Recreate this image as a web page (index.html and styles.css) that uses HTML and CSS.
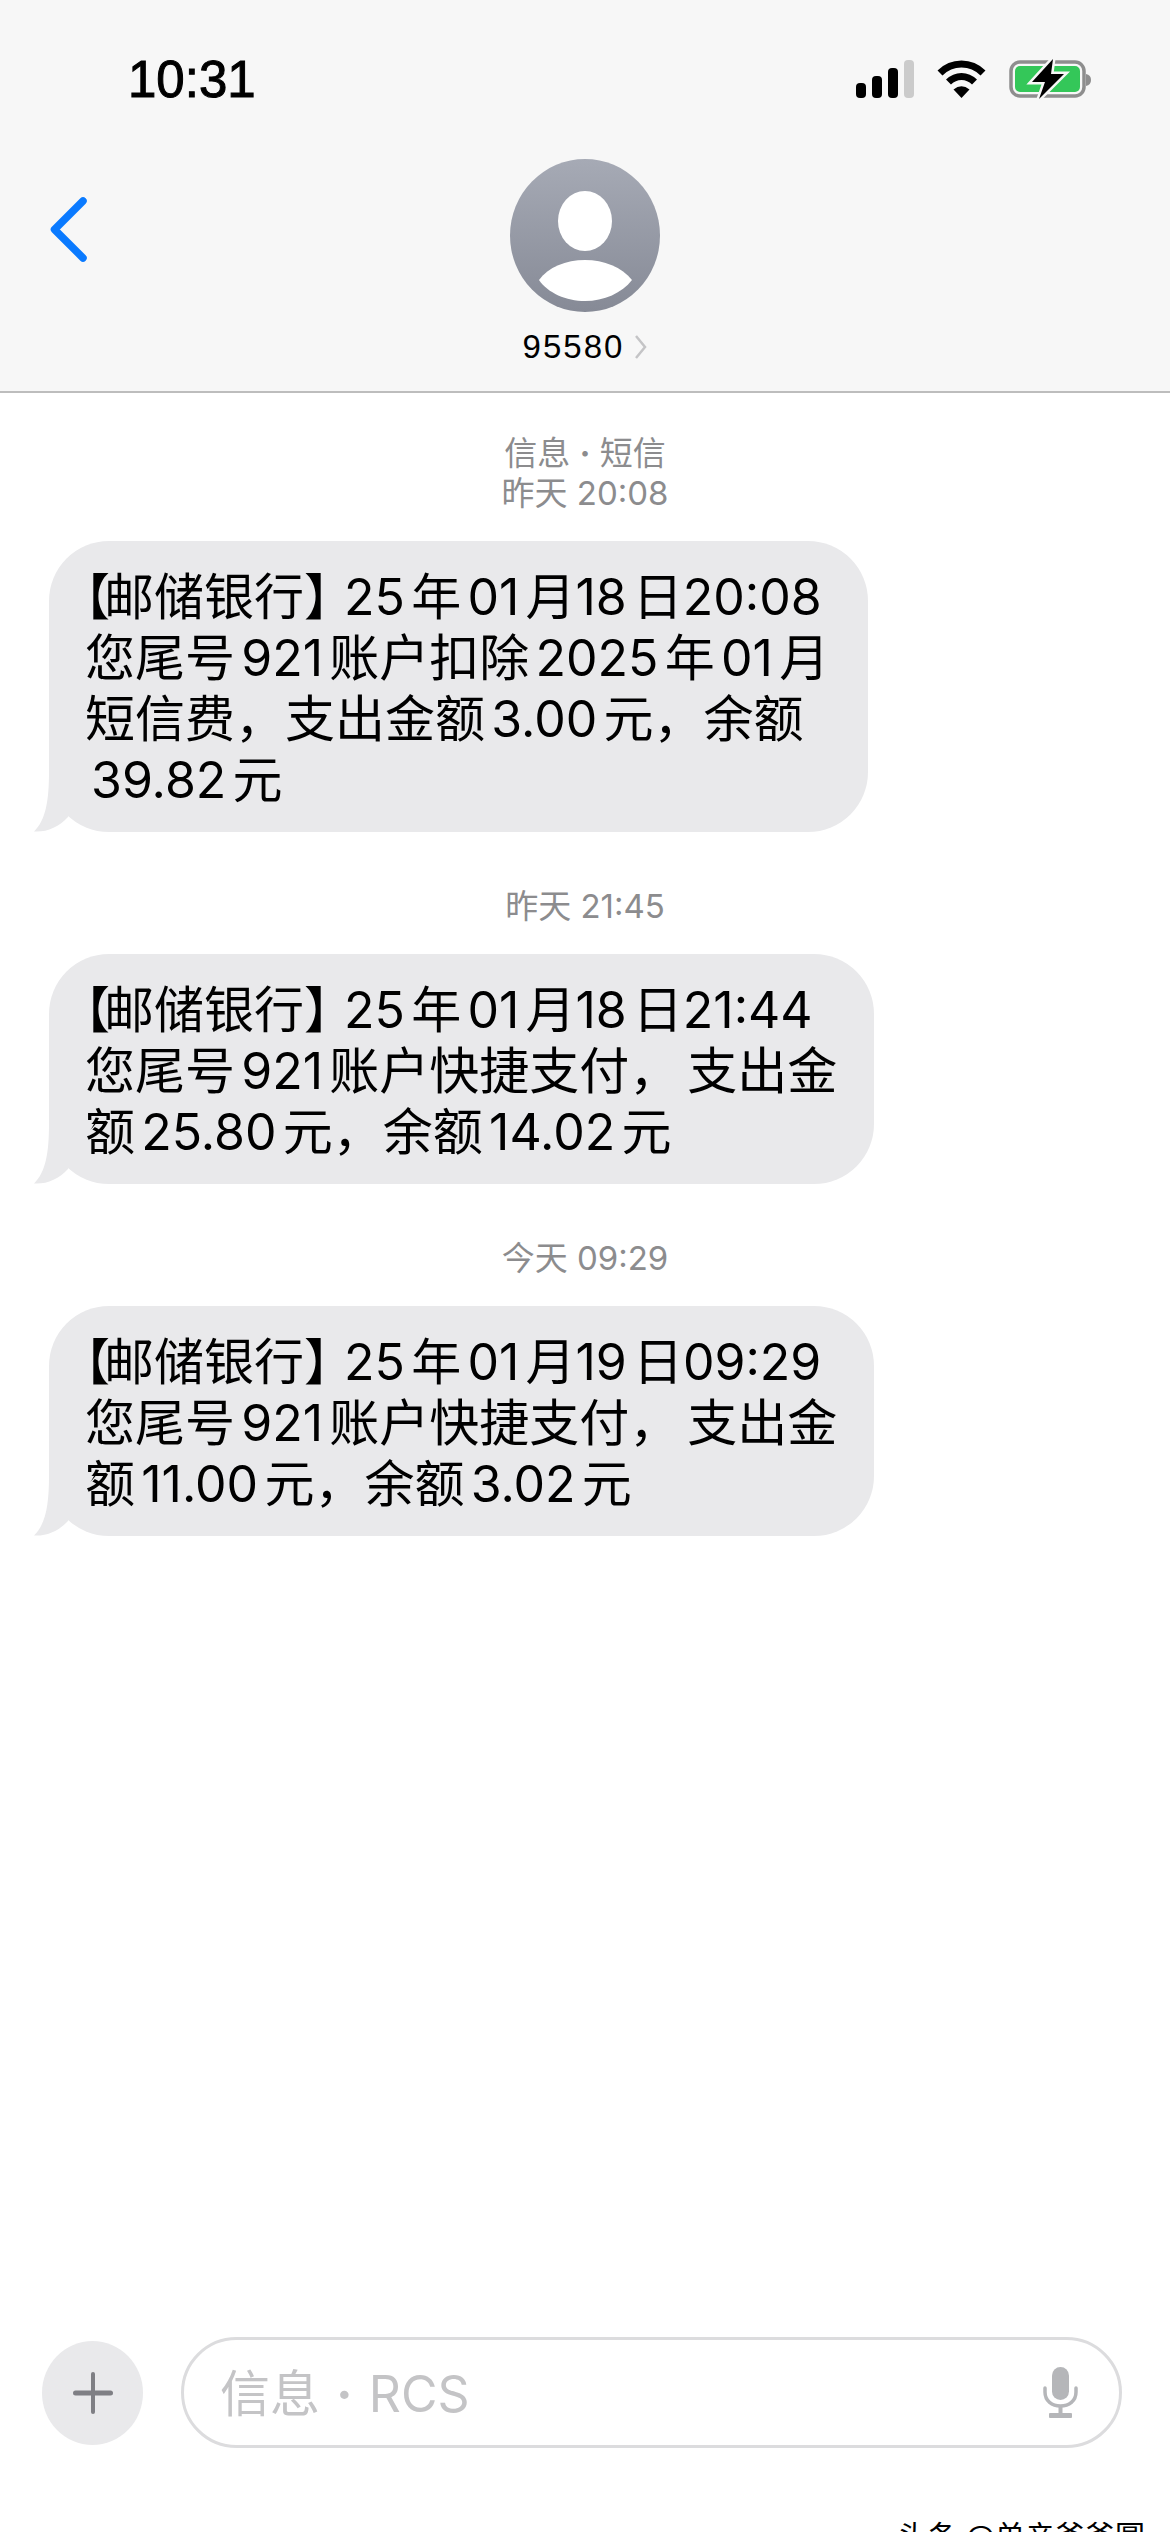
FILE: index.html
```html
<!DOCTYPE html>
<html lang="zh-CN">

<head>
    <meta charset="UTF-8">
    <meta name="viewport" content="width=device-width, initial-scale=1.0">
    <title>95580</title>
    <link rel="stylesheet" href="styles.css">
</head>

<body>
    <header class="header">
        <div class="status">
            <span class="time">10:31</span>
            <div class="status-icons">
                <svg width="58" height="38" viewBox="0 0 58 38">
                    <rect x="0" y="23" width="10" height="15" rx="4" fill="#000" />
                    <rect x="16" y="16" width="10" height="22" rx="4" fill="#000" />
                    <rect x="32" y="8" width="10" height="30" rx="4" fill="#000" />
                    <rect x="48" y="0" width="10" height="38" rx="4" fill="#cbcbcb" />
                </svg>
                <svg width="49" height="38" viewBox="0 0 49 38">
                    <path d="M3 13 C15 1 34 1 46 13" fill="none" stroke="#000" stroke-width="7" />
                    <path d="M11.500 22 C19 14.500 30 14.500 37.500 22" fill="none" stroke="#000" stroke-width="7" />
                    <path d="M16.500 29.500 Q24.500 23 32.500 29.500 L24.500 38 Z" fill="#000" />
                </svg>
                <svg class="battery" width="82" height="38" viewBox="0 0 82 38">
                    <rect x="2" y="2" width="73" height="34" rx="9" fill="none" stroke="#8e8e8e" stroke-width="3.500" />
                    <rect x="6" y="6" width="65" height="26" rx="5" fill="#34c759" />
                    <path d="M77 14 Q82 15 82 20 Q82 25 77 26 Z" fill="#8e8e8e" />
                    <path d="M44 -1 L23 22 L36 22 L30 39 L55 14 L42 14 Z" fill="#000" stroke="#f7f7f7" stroke-width="5" paint-order="stroke" />
                </svg>
            </div>
        </div>
        <div class="nav">
            <svg class="back" width="38" height="65" viewBox="0 0 38 65">
                <path d="M33 4 L4.500 32.500 L33 61" fill="none" stroke="#0a7aff" stroke-width="7.500" stroke-linecap="round" stroke-linejoin="round" />
            </svg>
            <div class="contact">
                <svg class="avatar" width="150" height="153" viewBox="0 0 150 153">
                    <defs>
                        <linearGradient id="avatar-fill" x1="0" y1="0" x2="0" y2="1">
                            <stop offset="0" stop-color="#a6aab5" />
                            <stop offset="1" stop-color="#868a96" />
                        </linearGradient>
                    </defs>
                    <ellipse cx="75" cy="76.500" rx="75" ry="76.500" fill="url(#avatar-fill)" />
                    <ellipse cx="75" cy="62" rx="27" ry="30" fill="#fff" />
                    <path d="M29 121 C38 108 56 101 75 101 C94 101 112 108 122 121 C112 134 94 142 75 142 C56 142 38 134 29 121 Z" fill="#fff" />
                </svg>
                <div class="name">
                    <span>95580</span>
                    <svg width="13" height="24" viewBox="0 0 13 24">
                        <path d="M2 1 L11 12 L2 23" fill="none" stroke="#c4c4c6" stroke-width="2.500" />
                    </svg>
                </div>
            </div>
        </div>
    </header>

    <main class="messages">
        <p class="stamp">信息 <span class="dot">·</span> 短信<br>昨天 20:08</p>
        <div class="bubble bubble-a">
            <span class="bk-l">【</span>邮储银行<span class="bk-r">】</span>25年01月<span class="tight day">18</span>日<span class="tight">20:08</span><br>
            您尾号921账户扣除2025年01月<br>
            短信费，支出金额3.00元，余额<br>
            <span class="line-in">39.82元</span>
            <svg class="tail" width="60" height="60" viewBox="0 0 60 60">
                <path d="M15 0 C15 28 12 48 0 59.500 C12 60.500 25 55 34 45 L60 0 Z" fill="#e9e9eb" />
            </svg>
        </div>

        <p class="stamp stamp-gap">昨天 21:45</p>
        <div class="bubble bubble-b">
            <span class="bk-l">【</span>邮储银行<span class="bk-r">】</span>25年01月<span class="tight day">18</span>日<span class="tight">21:44</span><br>
            您尾号921账户快捷支付<span class="comma">，</span>支出金<br>
            额25.80元，余额14.02元
            <svg class="tail" width="60" height="60" viewBox="0 0 60 60">
                <path d="M15 0 C15 28 12 48 0 59.500 C12 60.500 25 55 34 45 L60 0 Z" fill="#e9e9eb" />
            </svg>
        </div>

        <p class="stamp stamp-gap">今天 09:29</p>
        <div class="bubble bubble-b">
            <span class="bk-l">【</span>邮储银行<span class="bk-r">】</span>25年01月<span class="tight day">19</span>日<span class="tight">09:29</span><br>
            您尾号921账户快捷支付<span class="comma">，</span>支出金<br>
            额11.00元，余额3.02元
            <svg class="tail" width="60" height="60" viewBox="0 0 60 60">
                <path d="M15 0 C15 28 12 48 0 59.500 C12 60.500 25 55 34 45 L60 0 Z" fill="#e9e9eb" />
            </svg>
        </div>
    </main>

    <footer class="composer">
        <div class="plus">
            <svg width="40" height="42" viewBox="0 0 40 42">
                <rect x="18" y="0" width="4" height="42" rx="2" fill="#7f7f84" />
                <rect x="0" y="18.500" width="40" height="5" rx="2.500" fill="#7f7f84" />
            </svg>
        </div>
        <div class="field">
            <span class="placeholder">信息 <span class="dot">·</span> RCS</span>
            <svg width="35" height="51" viewBox="0 0 35 51">
                <rect x="9" y="0" width="17" height="33" rx="8.500" fill="#b5b6b9" />
                <path d="M2 21 V25 C2 34 9 39 17.500 39 C26 39 33 34 33 25 V21" fill="none" stroke="#b5b6b9" stroke-width="3.500" stroke-linecap="round" />
                <rect x="15.500" y="39" width="4" height="8" fill="#b5b6b9" />
                <rect x="6" y="46" width="23" height="5" rx="1" fill="#b5b6b9" />
            </svg>
        </div>
    </footer>

    <div class="watermark">头条 @单亲爸爸圆</div>
</body>

</html>
```

FILE: styles.css
```css
html,
body {
    margin: 0;
    height: 2532px;
    overflow: hidden;
}

body {
    position: relative;
    display: flex;
    flex-direction: column;
    background-color: #FFF;
    color: #000;
    font-family: Inter, "Noto Sans CJK SC", sans-serif;
}

.header {
    box-sizing: border-box;
    height: 393px;
    background-color: #f7f7f7;
    border-bottom: 2px solid #bdbdbd;
}

.status {
    display: flex;
    justify-content: space-between;
    align-items: center;
    height: 158px;
    padding: 0 79px 0 128px;
}

.time {
    font-family: "Liberation Sans", sans-serif;
    font-size: 51px;
    -webkit-text-stroke: 1px #000;
}

.status-icons {
    display: flex;
    align-items: center;
    gap: 23px;
}

.battery {
    overflow: visible;
}

.nav {
    display: grid;
    grid-template-columns: 1fr auto 1fr;
}

.back {
    margin: 39px 0 0 50px;
}

.contact {
    display: flex;
    flex-direction: column;
    align-items: center;
    padding-top: 1px;
}

.name {
    display: flex;
    align-items: center;
    gap: 10px;
    margin-top: 15px;
    font-family: "Liberation Sans", sans-serif;
    font-size: 33px;
    line-height: 40px;
    letter-spacing: 2px;
}

.messages {
    flex: 1;
    display: flex;
    flex-direction: column;
    padding-top: 40px;
}

.stamp {
    margin: 0;
    color: #8c8c8e;
    font-size: 33px;
    line-height: 40px;
    text-align: center;
}

.stamp-gap {
    margin-top: 54px;
}

.dot {
    font-weight: 700;
}

.bubble {
    position: relative;
    box-sizing: border-box;
    margin: 28px 0 0 49px;
    padding: 26px 0 21px 36px;
    background-color: #e9e9eb;
    border-radius: 60px;
    font-size: 50px;
    line-height: 61px;
    white-space: nowrap;
    text-autospace: normal;
}

.bubble-a {
    width: 819px;
}

.bubble-b {
    width: 825px;
}

.bk-l,
.bk-r {
    font-feature-settings: "halt";
}

.bk-l {
    letter-spacing: -6px;
}

.bk-r {
    margin-right: 15px;
}

.tight {
    text-autospace: no-autospace;
}

.day {
    margin-right: 6px;
}

.comma {
    margin-right: 8px;
}

.line-in {
    margin-left: 6px;
}

.tail {
    position: absolute;
    left: -15px;
    bottom: 0;
}

.composer {
    display: flex;
    align-items: center;
    gap: 38px;
    padding: 0 48px 84px 42px;
}

.plus {
    flex: none;
    display: flex;
    align-items: center;
    justify-content: center;
    width: 101px;
    height: 104px;
    background-color: #e9e9eb;
    border-radius: 50%;
}

.field {
    flex: 1;
    box-sizing: border-box;
    display: flex;
    align-items: center;
    justify-content: space-between;
    height: 111px;
    padding: 0 41px 0 36px;
    border: 3px solid #dcdcde;
    border-radius: 56px;
}

.placeholder {
    margin-top: -6px;
    color: #c4c4c6;
    font-size: 50px;
    word-spacing: 2px;
}

.watermark {
    position: absolute;
    right: 25px;
    top: 2511px;
    font-size: 30px;
    line-height: 50px;
    white-space: nowrap;
}
```
